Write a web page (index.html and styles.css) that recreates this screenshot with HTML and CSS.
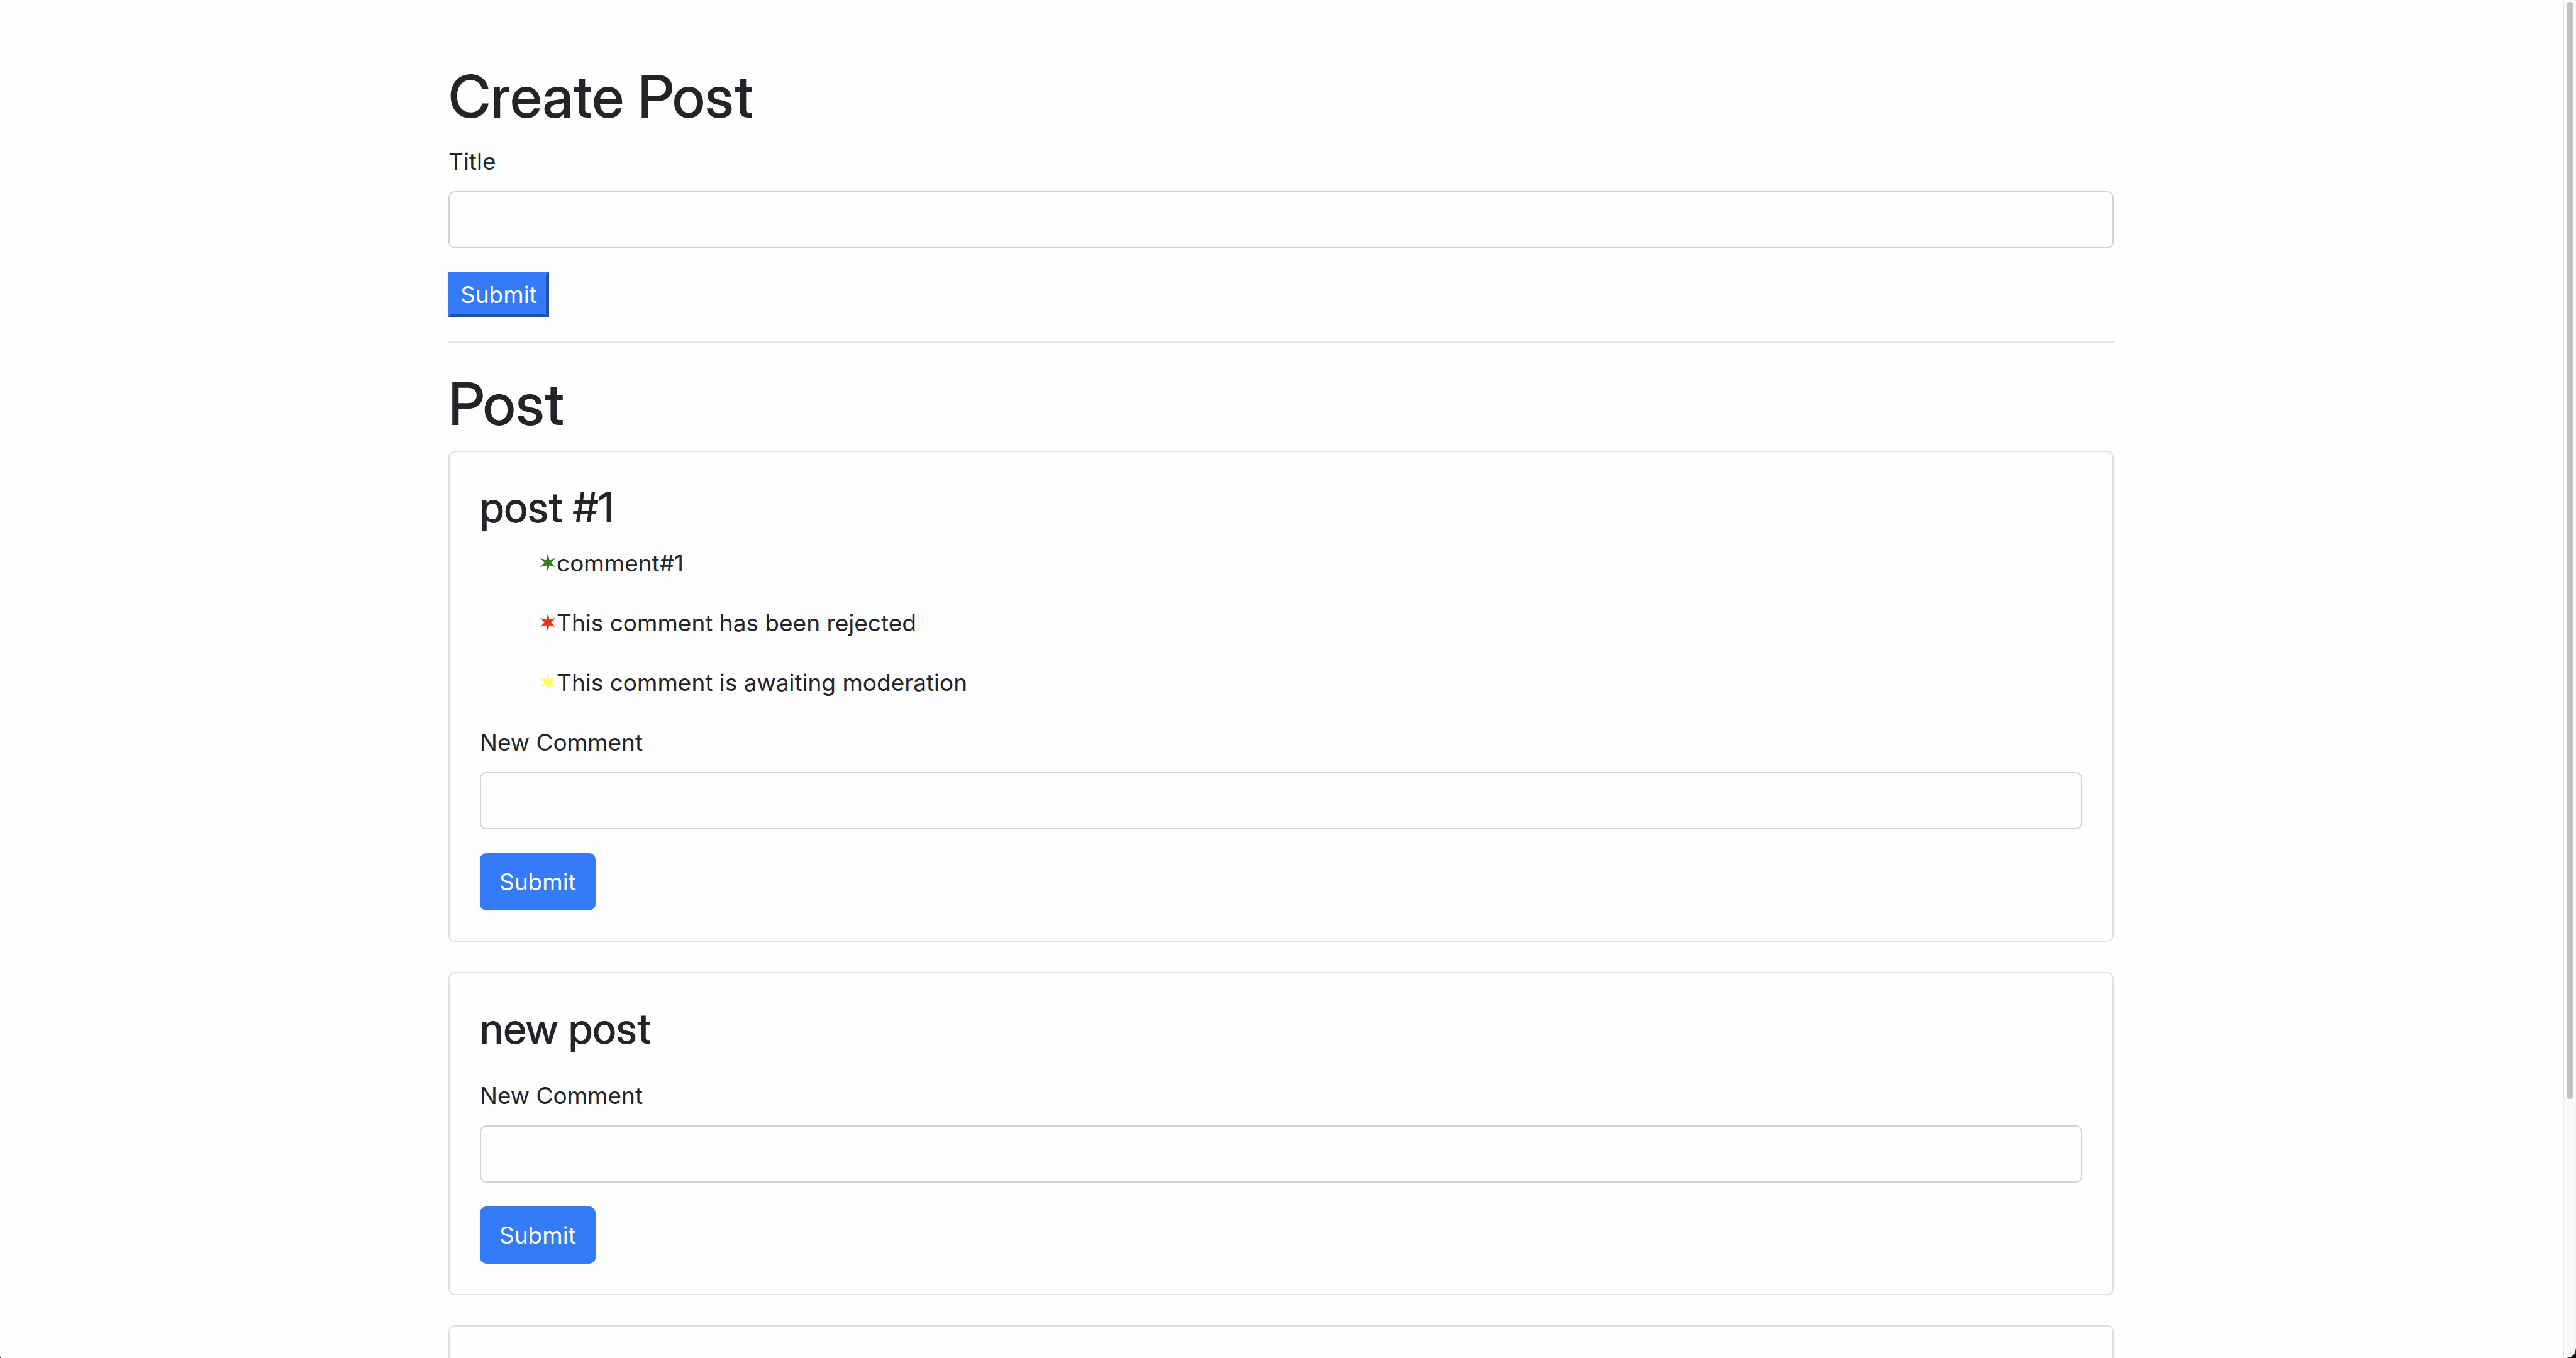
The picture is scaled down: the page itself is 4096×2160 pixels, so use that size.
FILE: index.html
```html
<!DOCTYPE html>
<html lang="en">
<head>
<meta charset="utf-8">
<title>Posts</title>
<link rel="stylesheet" href="styles.css">
</head>
<body>
<svg class="symbols" aria-hidden="true">
  <symbol id="star" viewBox="0 0 24 28">
    <path d="M12 0 14.6 9.6 24 7 17.2 14 24 21 14.6 18.4 12 28 9.4 18.4 0 21 6.8 14 0 7 9.4 9.6Z"/>
  </symbol>
</svg>
<div class="window">
  <main class="viewport">
    <div class="container">
      <h1 class="heading">Create Post</h1>
      <form>
        <div class="form-group">
          <label class="label" for="title">Title</label>
          <input class="form-control" id="title" type="text">
        </div>
        <button class="btn-plain" type="button">Submit</button>
      </form>
      <hr class="divider">
      <h1 class="heading">Post</h1>

      <article class="card">
        <h3 class="card-title">post #1</h3>
        <ul class="comments">
          <li class="comment"><svg class="star approved"><use href="#star"/></svg>comment#1</li>
          <li class="comment"><svg class="star rejected"><use href="#star"/></svg>This comment has been rejected</li>
          <li class="comment"><svg class="star pending"><use href="#star"/></svg>This comment is awaiting moderation</li>
        </ul>
        <form>
          <div class="form-group">
            <label class="label" for="comment-1">New Comment</label>
            <input class="form-control" id="comment-1" type="text">
          </div>
          <button class="btn" type="button">Submit</button>
        </form>
      </article>

      <article class="card">
        <h3 class="card-title">new post</h3>
        <ul class="comments"></ul>
        <form>
          <div class="form-group">
            <label class="label" for="comment-2">New Comment</label>
            <input class="form-control" id="comment-2" type="text">
          </div>
          <button class="btn" type="button">Submit</button>
        </form>
      </article>

      <article class="card card-next"></article>
    </div>
  </main>
  <div class="scrollbar"><div class="thumb"></div></div>
  <span class="corner corner-left"></span>
  <span class="corner corner-right"></span>
</div>
</body>
</html>
```
FILE: styles.css
```css
* {
  box-sizing: border-box;
}

body {
  margin: 0;
  background: #fefefe;
  color: #212529;
  font: 400 37px/57px Inter, "Liberation Sans", sans-serif;
}

.symbols {
  display: none;
}

.window {
  position: relative;
  display: grid;
  grid-template-columns: minmax(0, 1fr) 21px;
  height: 100vh;
  overflow: hidden;
}

.viewport {
  overflow: hidden;
}

.container {
  max-width: 2721px;
  margin: 0 auto;
  padding: 96px 37px 0 36px;
}

.heading {
  margin: 0 0 18px;
  font-family: "Inter Display", Inter, "Liberation Sans", sans-serif;
  font-size: 93px;
  line-height: 114px;
  font-weight: 550;
}

.label {
  display: block;
  margin-bottom: 19px;
}

.form-group {
  margin-bottom: 38px;
}

.form-control {
  display: block;
  width: 100%;
  padding: 15px 28px;
  border: 2px solid #ced4da;
  border-radius: 10px;
  background: #fefefe;
  color: inherit;
  font: inherit;
}

.btn-plain,
.btn {
  display: block;
  background: #357af6;
  color: #fff;
  font: inherit;
}

.btn-plain {
  padding: 2px 14px;
  border: 5px solid;
  border-color: #357af6 #2053a8 #2053a8 #357af6;
}

.btn {
  padding: 15px 29px;
  border: 2px solid #357af6;
  border-radius: 10px;
}

.divider {
  height: 3px;
  margin: 38px 0 40px;
  border: 0;
  background: #e5e5e5;
}

.card {
  margin-bottom: 48px;
  padding: 48px;
  border: 2px solid #dfdfdf;
  border-radius: 10px;
}

.card-next {
  min-height: 468px;
}

.card-title {
  margin: 0 0 20px;
  font-family: "Inter Display", Inter, "Liberation Sans", sans-serif;
  font-size: 67px;
  line-height: 80px;
  font-weight: 550;
}

.comments {
  margin: 0 0 38px;
  padding: 0 0 0 96px;
  list-style: none;
}

.comment {
  margin-bottom: 38px;
}

.star {
  width: 24px;
  height: 28px;
  margin-right: 2px;
}

.approved {
  fill: #377e22;
}

.rejected {
  fill: #eb3323;
}

.pending {
  fill: #ffff54;
}

.scrollbar {
  padding: 3px 4px;
  border-left: 2px solid #e8e8e8;
  border-right: 1px solid #f2f2f2;
  background: #fafafa;
}

.thumb {
  width: 11px;
  height: 81%;
  border-radius: 6px;
  background: #c1c1c1;
}

.corner {
  position: absolute;
  bottom: 0;
}

.corner-left {
  left: 0;
  width: 3px;
  height: 3px;
  background: linear-gradient(45deg, #0b1a14 50%, transparent 50%);
}

.corner-right {
  right: 0;
  width: 14px;
  height: 14px;
  background: radial-gradient(circle at 0 0, transparent 13px, #0b1220 14px);
}
```
